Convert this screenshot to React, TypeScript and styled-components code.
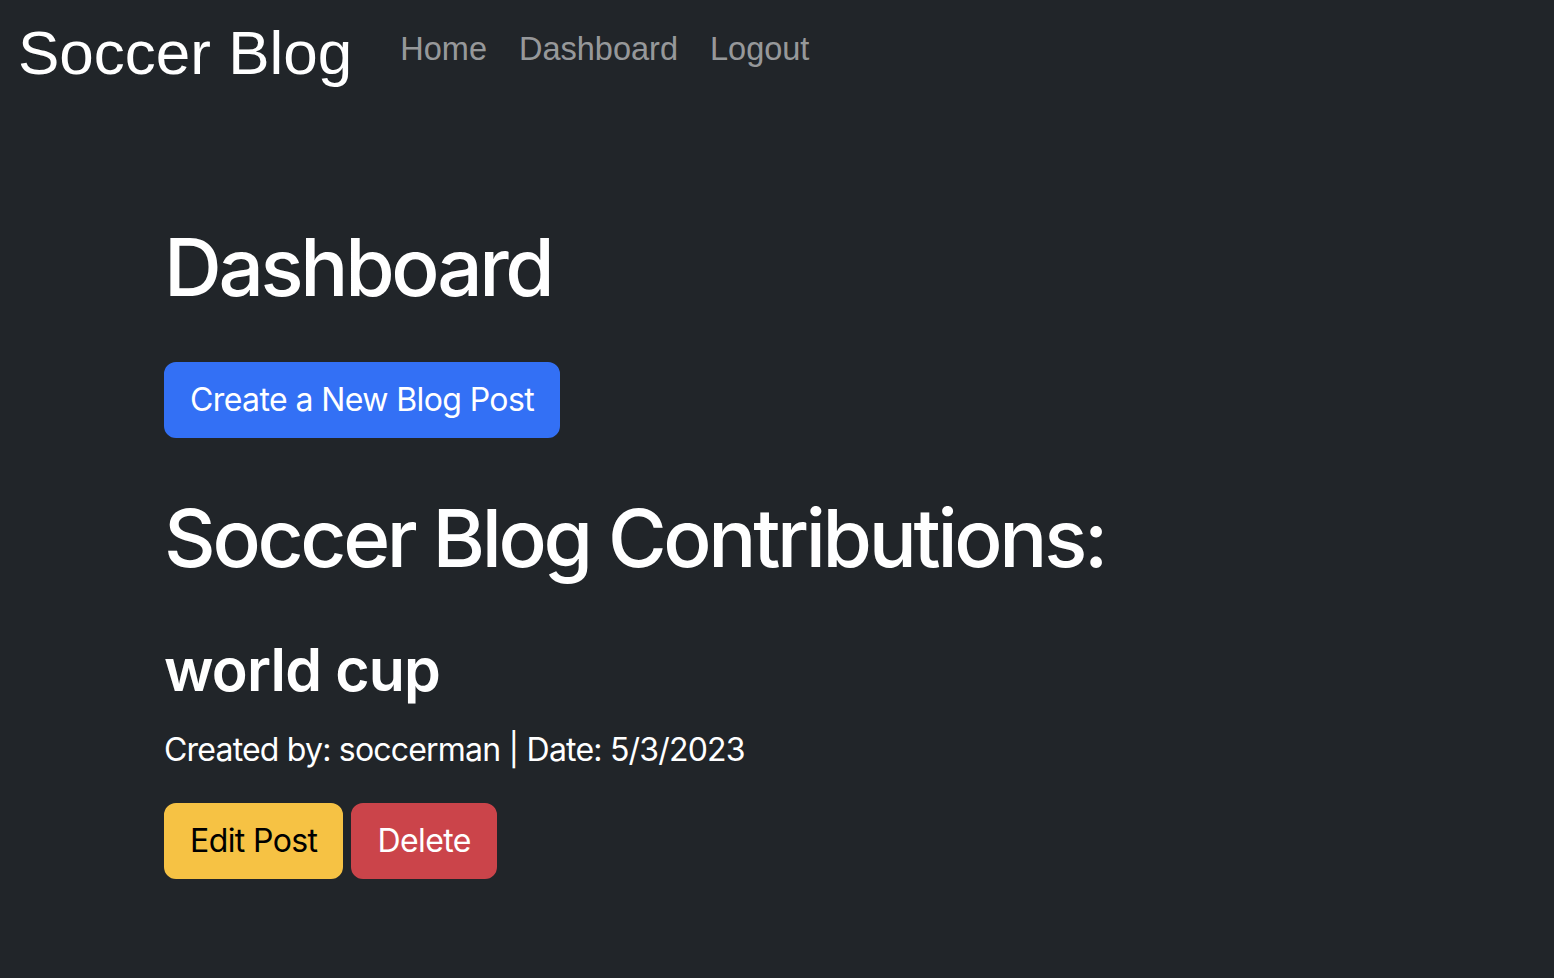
import React from "react";
import styled, { createGlobalStyle } from "styled-components";

const GlobalStyle = createGlobalStyle`
  html, body {
    margin: 0;
    padding: 0;
    background: #212529;
  }
  body {
    min-height: 978px;
    color: #ffffff;
    font-family: Inter, "Noto Sans", sans-serif;
  }
  * { box-sizing: border-box; }
`;

const Page = styled.div`
  min-height: 978px;
  background: #212529;
`;

const Navbar = styled.nav`
  display: flex;
  align-items: flex-start;
  padding: 19px 18px;
`;

const Brand = styled.a`
  font-family: "Liberation Sans", Arial, sans-serif;
  font-size: 62px;
  line-height: 68px;
  color: #ffffff;
  text-decoration: none;
  margin-right: 32px;
`;

const NavList = styled.ul`
  display: flex;
  list-style: none;
  margin: 12px 0 0;
  padding: 0;
`;

const NavLink = styled.a`
  display: block;
  font-family: "Liberation Sans", Arial, sans-serif;
  font-size: 32.5px;
  line-height: 36px;
  padding: 0 16px;
  color: rgba(255, 255, 255, 0.55);
  text-decoration: none;
`;

const Main = styled.main`
  padding: 113px 24px 0 164px;
`;

const Title = styled.h1<{ $mt: number }>`
  font-size: 80px;
  font-weight: 500;
  line-height: 96px;
  margin: ${(p) => p.$mt}px 0 0;
  letter-spacing: -3.3px;
`;

const PostTitle = styled.h3`
  font-size: 59px;
  font-weight: 600;
  line-height: 70px;
  margin: 49px 0 0;
  letter-spacing: -0.8px;
`;

const Meta = styled.p`
  font-size: 32px;
  line-height: 48px;
  margin: 21px 0 0;
  letter-spacing: -0.8px;
`;

const Button = styled.button<{ $bg: string; $fg: string }>`
  font-family: Inter, "Noto Sans", sans-serif;
  font-size: 32px;
  line-height: 48px;
  letter-spacing: -0.6px;
  padding: 12px 24px;
  border: 2px solid ${(p) => p.$bg};
  border-radius: 12px;
  background: ${(p) => p.$bg};
  color: ${(p) => p.$fg};
  cursor: pointer;
`;

const ButtonRow = styled.div<{ $mt: number }>`
  display: flex;
  gap: 8px;
  margin-top: ${(p) => p.$mt}px;
`;

export default function App() {
  return (
    <Page>
      <GlobalStyle />
      <Navbar>
        <Brand href="#">Soccer Blog</Brand>
        <NavList>
          <li><NavLink href="#">Home</NavLink></li>
          <li><NavLink href="#">Dashboard</NavLink></li>
          <li><NavLink href="#">Logout</NavLink></li>
        </NavList>
      </Navbar>
      <Main>
        <Title $mt={0}>Dashboard</Title>
        <ButtonRow $mt={47}>
          <Button $bg="#3370f5" $fg="#ffffff">Create a New Blog Post</Button>
        </ButtonRow>
        <Title $mt={52}>Soccer Blog Contributions:</Title>
        <PostTitle>world cup</PostTitle>
        <Meta>Created by: soccerman | Date: 5/3/2023</Meta>
        <ButtonRow $mt={29}>
          <Button $bg="#f6c244" $fg="#000000">Edit Post</Button>
          <Button $bg="#cb444a" $fg="#ffffff">Delete</Button>
        </ButtonRow>
      </Main>
    </Page>
  );
}
